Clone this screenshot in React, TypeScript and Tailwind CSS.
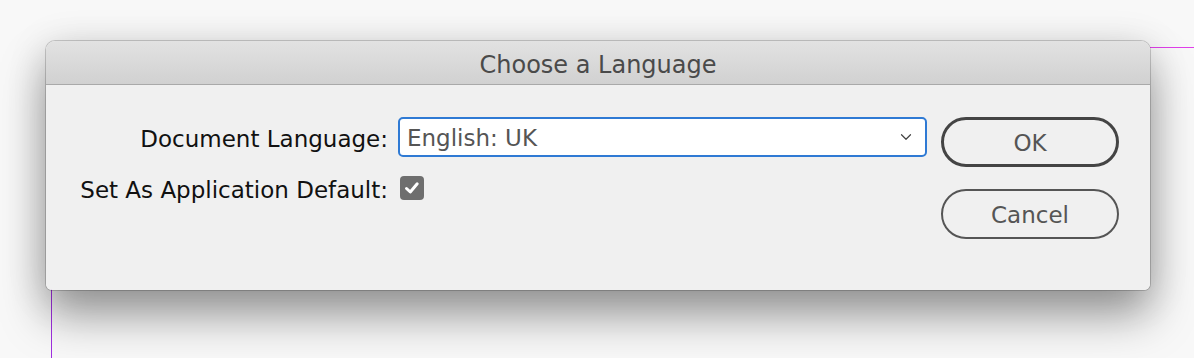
import { ChevronDown } from 'lucide-react'

const font = { fontFamily: '"DejaVu Sans", "Liberation Sans", sans-serif' }

function CheckBox() {
  return (
    <div className="w-6 h-6 rounded-[4px] bg-[#6e6e6e] flex items-center justify-center">
      <svg width="20" height="20" viewBox="0 0 20 20" fill="none">
        <path d="M4.5 10.5 L8.3 14 L15.2 5.8" stroke="white" strokeWidth="3" strokeLinecap="round" strokeLinejoin="round" />
      </svg>
    </div>
  )
}

export default function App() {
  return (
    <div className="relative w-[1194px] h-[358px] overflow-hidden bg-[#f8f8f8]" style={font}>
      {/* guide lines behind dialog */}
      <div className="absolute left-[1150px] top-[47px] w-[44px] h-px bg-[#e040ea]" />
      <div className="absolute left-[51px] top-[280px] w-px h-[78px] bg-[#a030e0]" />

      <div className="relative ml-[46px] mt-[41px] w-[1104px] rounded-t-[9px] rounded-b-[6px] shadow-[0_26px_46px_rgba(0,0,0,0.36),0_0_0_1px_rgba(0,0,0,0.18),0_6px_40px_rgba(0,0,0,0.14)] overflow-hidden">
        <div className="h-[44px] bg-gradient-to-b from-[#e2e2e2] to-[#d1d1d1] border-b border-[#a9a9a9] flex items-center justify-center pt-[5px]">
          <span className="text-[24px] text-[#4a4a4a]">Choose a Language</span>
        </div>

        <div className="h-[205px] bg-[#f0f0f0] flex pt-[32px]">
          <div className="flex flex-col">
            <div className="flex items-center h-[40px]">
              <div className="w-[342px] text-right text-[23px] text-[#111] pt-[5px]">Document Language:</div>
              <div className="ml-[10px] w-[529px] h-[40px] rounded-[5px] border-2 border-[#2f7ad4] bg-white flex items-center justify-between pl-[7px] pr-[10px]">
                <span className="text-[23px] text-[#555] pt-[3px]">English: UK</span>
                <ChevronDown size={18} strokeWidth={1.6} className="text-[#444]" />
              </div>
            </div>
            <div className="flex items-center h-[24px] mt-[19px]">
              <div className="w-[342px] text-right text-[23px] text-[#111] pt-[5px]">Set As Application Default:</div>
              <div className="ml-[12px]">
                <CheckBox />
              </div>
            </div>
          </div>

          <div className="ml-[14px] flex flex-col gap-[22px]">
            <button className="w-[178px] h-[50px] rounded-full border-[3px] border-[#444] text-[23px] text-[#555] pt-[3px]">OK</button>
            <button className="w-[178px] h-[50px] rounded-full border-2 border-[#555] text-[23px] text-[#555] pt-[3px]">Cancel</button>
          </div>
        </div>
      </div>
    </div>
  )
}
